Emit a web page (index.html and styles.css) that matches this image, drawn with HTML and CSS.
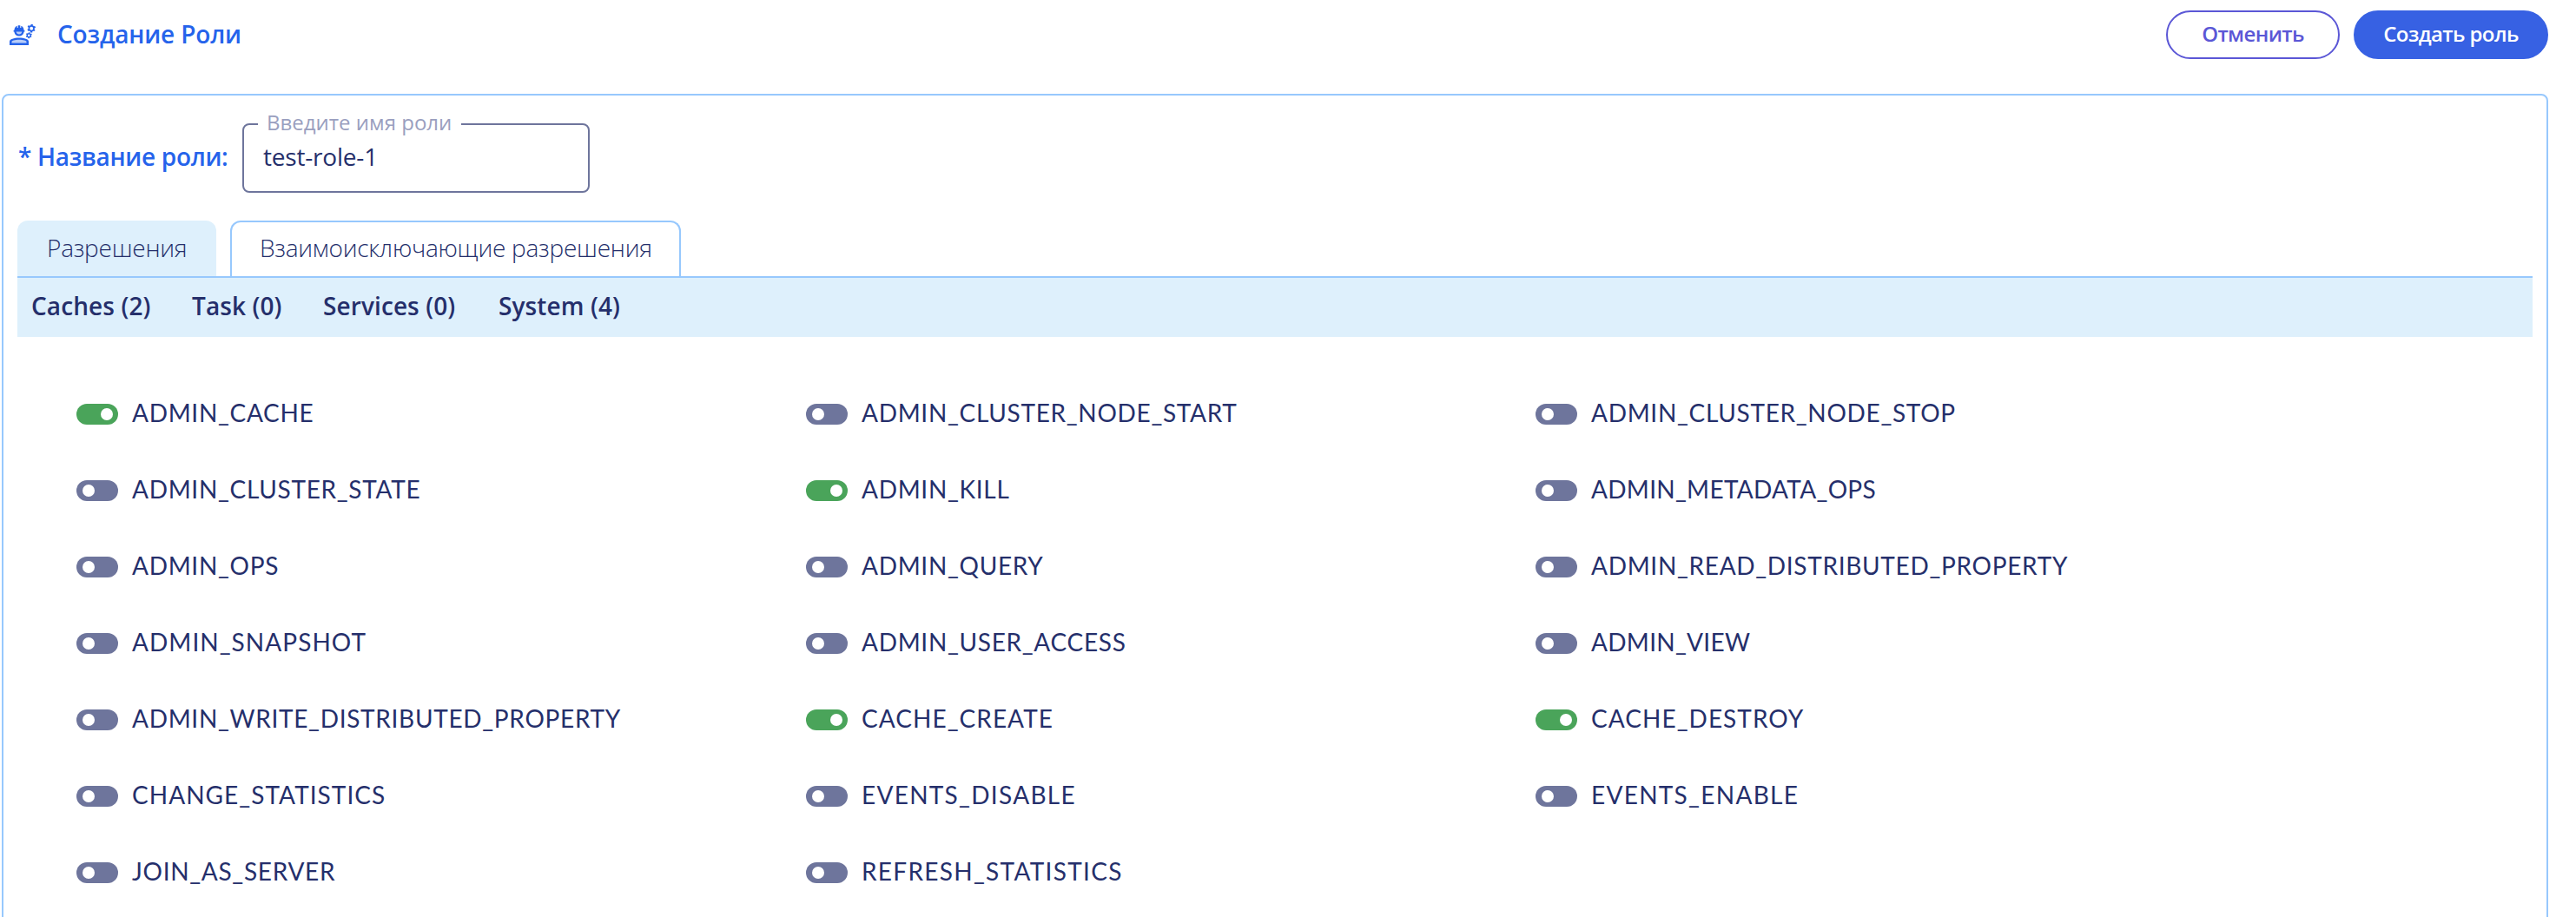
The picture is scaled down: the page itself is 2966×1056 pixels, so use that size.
FILE: index.html
```html
<!DOCTYPE html>
<html lang="ru">
<head>
<meta charset="utf-8">
<title>Создание Роли</title>
<link rel="stylesheet" href="styles.css">
</head>
<body>
<header class="header">
  <svg class="header-icon" viewBox="0 0 30 24" fill="currentColor">
    <path d="M0 24v-4.200C0 17.200 5 15.500 11 15.500s11 1.700 11 4.300V24z"/>
    <path d="M2.500 21.500v-1.400c0-1.300 3.500-2.300 8.500-2.300s8.500 1 8.500 2.300v1.400z" fill="#b8cdf9"/>
    <path d="M4.600 8.400V7h.8c.1-2.400 1.300-4.300 3.300-5.200V4h1V1.300h2.600V4h1V1.800c2 .9 3.200 2.800 3.300 5.200h.8v1.400h-.8c-.3 3-2.600 5-5.600 5s-5.300-2-5.600-5z"/>
    <path d="M7.600 8.500h6.800c-.4 1.900-1.700 3-3.400 3s-3-1.100-3.400-3z" fill="#b8cdf9"/>
    <g fill="none" stroke="currentColor">
      <circle cx="25.200" cy="4.700" r="2.800" stroke-width="1.700"/>
      <circle cx="25.200" cy="4.700" r="4" stroke-width="1.700" stroke-dasharray="2.090 2.090" stroke-dashoffset="1.050" transform="rotate(30 25.200 4.700)"/>
      <circle cx="22.300" cy="12.700" r="2" stroke-width="1.400"/>
      <circle cx="22.300" cy="12.700" r="2.900" stroke-width="1.300" stroke-dasharray="1.520 1.520" stroke-dashoffset=".76" transform="rotate(30 22.300 12.700)"/>
    </g>
  </svg>
  <h1 class="title">Создание Роли</h1>
  <button class="btn btn-outline">Отменить</button>
  <button class="btn btn-primary">Создать роль</button>
</header>

<main class="card">
  <div class="name-row">
    <label class="name-label" for="role">* Название роли:</label>
    <fieldset class="field">
      <legend class="legend"><span>Введите имя роли</span></legend>
      <input class="input" id="role" type="text" value="test-role-1">
    </fieldset>
  </div>

  <nav class="tabs">
    <div class="tab tab-filled">Разрешения</div>
    <div class="tab tab-outlined">Взаимоисключающие разрешения</div>
  </nav>

  <div class="groups">
    <span class="caches">Caches (2)</span>
    <span class="task">Task (0)</span>
    <span class="services">Services (0)</span>
    <span class="system">System (4)</span>
  </div>

  <div class="grid">
    <label class="perm"><i class="toggle on"></i><span>ADMIN_CACHE</span></label>
    <label class="perm"><i class="toggle"></i><span>ADMIN_CLUSTER_NODE_START</span></label>
    <label class="perm"><i class="toggle"></i><span>ADMIN_CLUSTER_NODE_STOP</span></label>
    <label class="perm"><i class="toggle"></i><span>ADMIN_CLUSTER_STATE</span></label>
    <label class="perm"><i class="toggle on"></i><span>ADMIN_KILL</span></label>
    <label class="perm"><i class="toggle"></i><span class="tight">ADMIN_METADATA_OPS</span></label>
    <label class="perm"><i class="toggle"></i><span>ADMIN_OPS</span></label>
    <label class="perm"><i class="toggle"></i><span>ADMIN_QUERY</span></label>
    <label class="perm"><i class="toggle"></i><span>ADMIN_READ_DISTRIBUTED_PROPERTY</span></label>
    <label class="perm"><i class="toggle"></i><span class="wide">ADMIN_SNAPSHOT</span></label>
    <label class="perm"><i class="toggle"></i><span>ADMIN_USER_ACCESS</span></label>
    <label class="perm"><i class="toggle"></i><span class="tight">ADMIN_VIEW</span></label>
    <label class="perm"><i class="toggle"></i><span>ADMIN_WRITE_DISTRIBUTED_PROPERTY</span></label>
    <label class="perm"><i class="toggle on"></i><span class="wide">CACHE_CREATE</span></label>
    <label class="perm"><i class="toggle on"></i><span class="wide">CACHE_DESTROY</span></label>
    <label class="perm"><i class="toggle"></i><span class="wide">CHANGE_STATISTICS</span></label>
    <label class="perm"><i class="toggle"></i><span class="wider">EVENTS_DISABLE</span></label>
    <label class="perm"><i class="toggle"></i><span class="wider">EVENTS_ENABLE</span></label>
    <label class="perm"><i class="toggle"></i><span>JOIN_AS_SERVER</span></label>
    <label class="perm"><i class="toggle"></i><span class="wider">REFRESH_STATISTICS</span></label>
  </div>
</main>
</body>
</html>
```
FILE: styles.css
```css
* { box-sizing: border-box; }

body {
  margin: 0;
  height: 1056px;
  overflow: hidden;
  background: #fff;
  color: #252f6b;
  font: 400 28px/40px "Open Sans", "Noto Sans", sans-serif;
}

.header {
  display: flex;
  align-items: center;
  width: 2934px;
  height: 108px;
  padding: 12px 0 40px 11px;
}

.header-icon {
  width: 30px;
  height: 24px;
  color: #2563eb;
}

.title {
  margin: 0 auto 0 25px;
  padding-bottom: 3px;
  color: #2563eb;
  font-size: 28px;
  font-weight: 600;
  letter-spacing: -0.15px;
}

.btn {
  height: 56px;
  padding: 0 0 3px;
  border: 2px solid #5b57d6;
  border-radius: 28px;
  font: 600 24px/32px "Open Sans", "Noto Sans", sans-serif;
  letter-spacing: -0.6px;
}

.btn-outline {
  width: 200px;
  background: #fff;
  color: #5b57d6;
}

.btn-primary {
  width: 224px;
  margin-left: 16px;
  border-color: #3761e3;
  background: #3761e3;
  color: #fff;
}

.card {
  width: 2932px;
  height: 1000px;
  margin-left: 2px;
  padding: 16px 16px 0;
  border: 2px solid #97c8fd;
  border-radius: 8px;
}

.name-row {
  display: flex;
  height: 128px;
}

.name-label {
  width: 259px;
  padding: 34px 0 0 1px;
  color: #2563eb;
  font-weight: 600;
  letter-spacing: -0.3px;
  white-space: nowrap;
}

.field {
  width: 400px;
  height: 96px;
  min-width: 0;
  margin: 0;
  padding: 0 22px;
  border: 2px solid #6e759c;
  border-radius: 8px;
}

.legend {
  width: 234px;
  height: 34px;
  margin-left: -6px;
  padding: 0 0 0 10px;
  color: #9a9fbf;
  font-size: 24px;
  line-height: 30px;
  white-space: nowrap;
}

.input {
  display: block;
  width: 100%;
  height: 40px;
  margin-top: 0;
  padding: 0;
  border: 0;
  outline: 0;
  background: transparent;
  color: #252f6b;
  font: 400 28px/40px "Open Sans", "Noto Sans", sans-serif;
  letter-spacing: -0.2px;
}

.tabs {
  display: flex;
  gap: 16px;
  height: 64px;
}

.tab {
  padding: 9px 0 0 32px;
  border: 2px solid transparent;
  border-bottom: 0;
  border-radius: 12px 12px 0 0;
  font-weight: 300;
  letter-spacing: -0.25px;
  white-space: nowrap;
}

.tab-filled {
  width: 229px;
  background: #def0fc;
}

.tab-outlined {
  width: 519px;
  border-color: #97c8fd;
}

.groups {
  display: flex;
  height: 70px;
  padding: 12px 0 0 16px;
  border-top: 2px solid #97c8fd;
  background: #def0fc;
  font-weight: 600;
  letter-spacing: 0.1px;
}

.caches { width: 185px; }
.task { width: 151px; }
.services { width: 202px; }

.grid {
  display: grid;
  grid-template-columns: repeat(3, 840px);
  grid-auto-rows: 88px;
  padding: 45px 0 0 68px;
}

.perm {
  display: flex;
  align-items: center;
  gap: 16px;
  font-family: Lato, "Noto Sans", sans-serif;
  letter-spacing: 0.7px;
}

.perm span { padding-bottom: 4px; }
.perm .tight { letter-spacing: 0.3px; }
.perm .wide { letter-spacing: 1.05px; }
.perm .wider { letter-spacing: 1.3px; }

.toggle {
  width: 48px;
  height: 24px;
  padding: 5px 7px;
  border-radius: 12px;
  background: #6e759c;
}

.toggle::before {
  content: "";
  display: block;
  width: 14px;
  height: 14px;
  border-radius: 50%;
  background: #fff;
}

.toggle.on { background: #4aa45a; }
.toggle.on::before { margin-left: 21px; }
```
